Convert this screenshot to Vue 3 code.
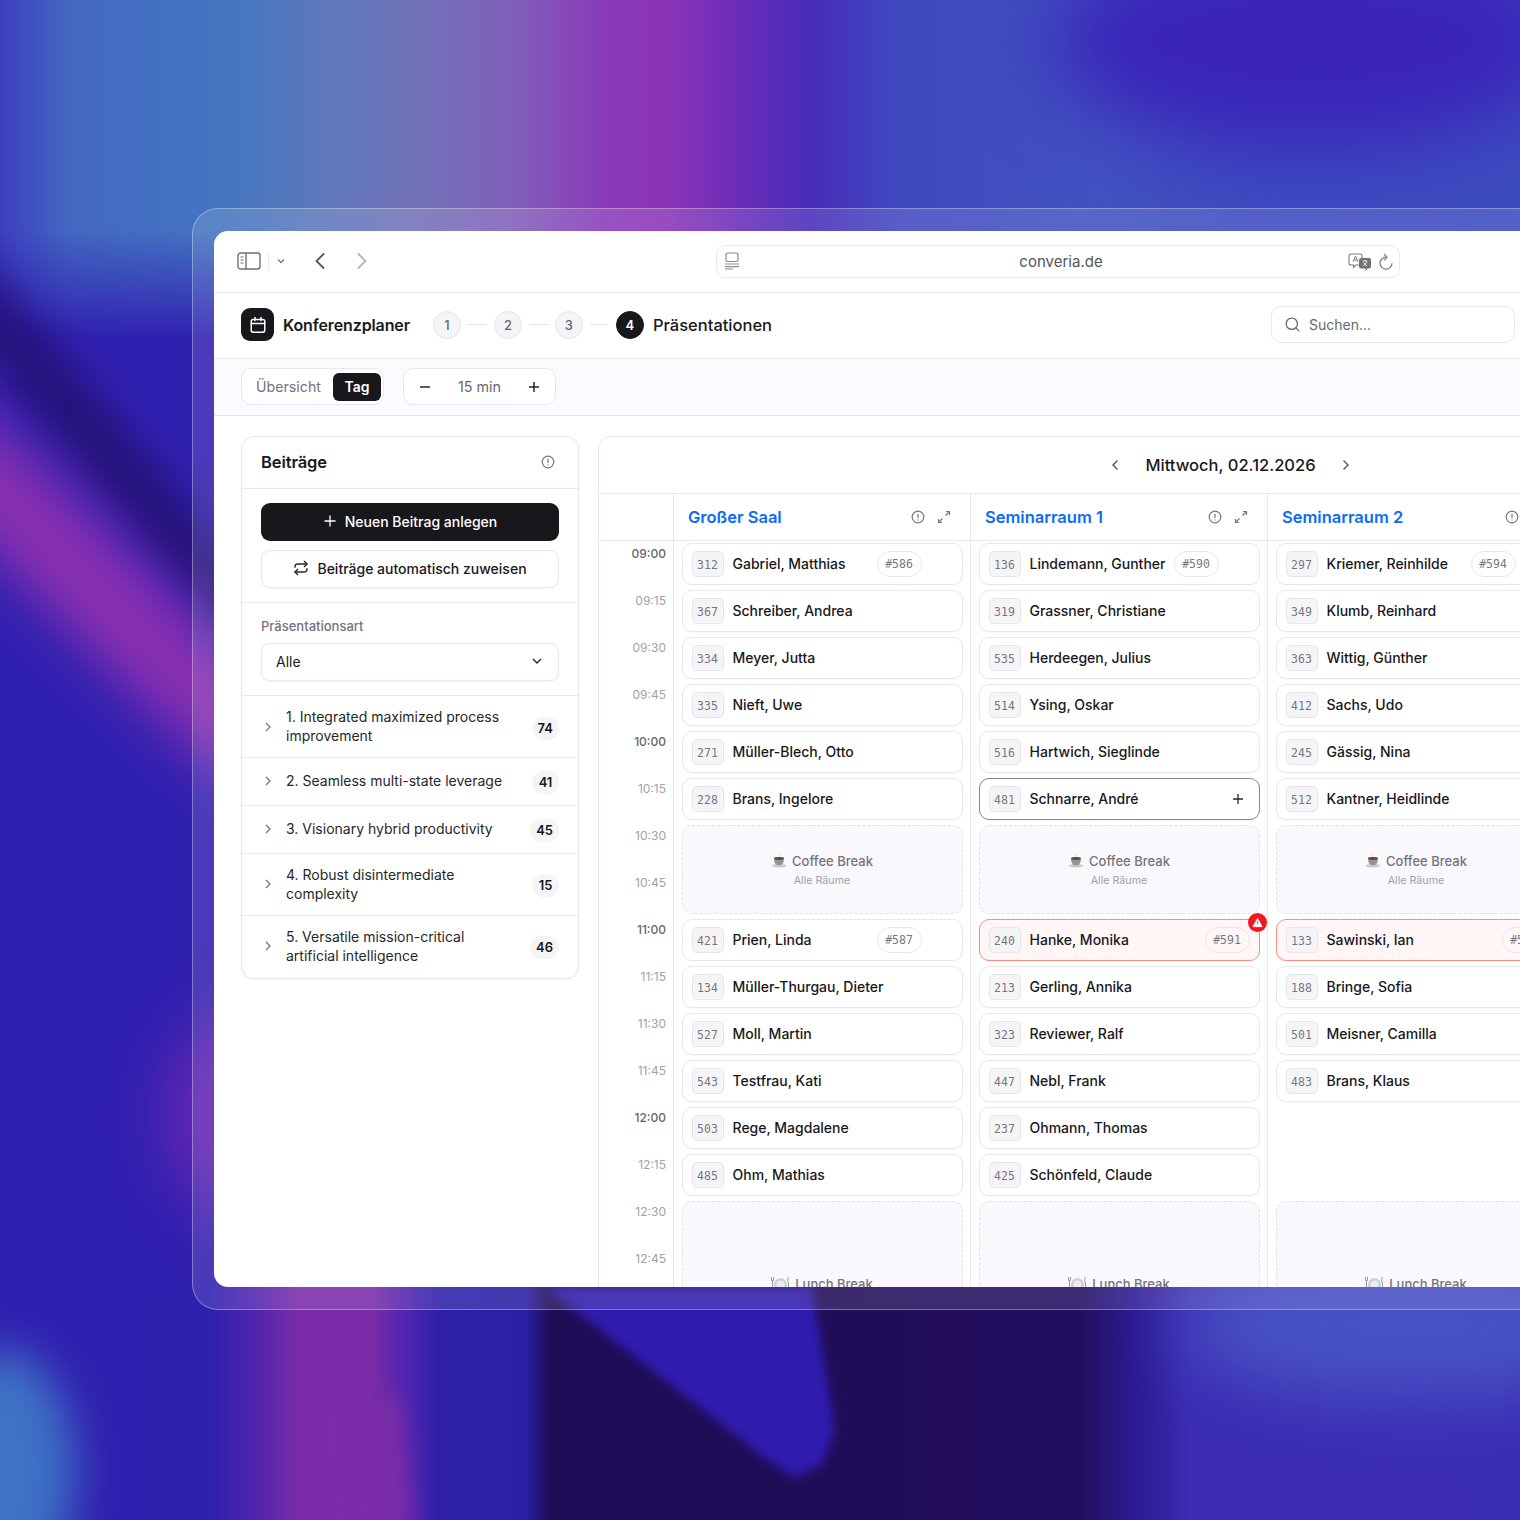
<script setup>
const times = [
  ['09:00', 1], ['09:15', 0], ['09:30', 0], ['09:45', 0], ['10:00', 1], ['10:15', 0], ['10:30', 0], ['10:45', 0],
  ['11:00', 1], ['11:15', 0], ['11:30', 0], ['11:45', 0], ['12:00', 1], ['12:15', 0], ['12:30', 0], ['12:45', 0],
]
const tracks = [
  ['1. Integrated maximized process improvement', 74],
  ['2. Seamless multi-state leverage', 41],
  ['3. Visionary hybrid productivity', 45],
  ['4. Robust disintermediate complexity', 15],
  ['5. Versatile mission-critical artificial intelligence', 46],
]
const b = (type) => ({ type })
const r = (id, name, chip, state) => ({ type: 'talk', id, name, chip, state })
const rooms = [
  {
    name: 'Großer Saal',
    items: [
      r(312, 'Gabriel, Matthias', '#586'), r(367, 'Schreiber, Andrea'), r(334, 'Meyer, Jutta'), r(335, 'Nieft, Uwe'),
      r(271, 'Müller-Blech, Otto'), r(228, 'Brans, Ingelore'), b('coffee'), r(421, 'Prien, Linda', '#587'),
      r(134, 'Müller-Thurgau, Dieter'), r(527, 'Moll, Martin'), r(543, 'Testfrau, Kati'), r(503, 'Rege, Magdalene'),
      r(485, 'Ohm, Mathias'), b('lunch'),
    ],
  },
  {
    name: 'Seminarraum 1',
    items: [
      r(136, 'Lindemann, Gunther', '#590'), r(319, 'Grassner, Christiane'), r(535, 'Herdeegen, Julius'), r(514, 'Ysing, Oskar'),
      r(516, 'Hartwich, Sieglinde'), r(481, 'Schnarre, André', null, 'hover'), b('coffee'), r(240, 'Hanke, Monika', '#591', 'conflict'),
      r(213, 'Gerling, Annika'), r(323, 'Reviewer, Ralf'), r(447, 'Nebl, Frank'), r(237, 'Ohmann, Thomas'),
      r(425, 'Schönfeld, Claude'), b('lunch'),
    ],
  },
  {
    name: 'Seminarraum 2',
    items: [
      r(297, 'Kriemer, Reinhilde', '#594'), r(349, 'Klumb, Reinhard'), r(363, 'Wittig, Günther'), r(412, 'Sachs, Udo'),
      r(245, 'Gässig, Nina'), r(512, 'Kantner, Heidlinde'), b('coffee'), r(133, 'Sawinski, Ian', '#591', 'conflict2'),
      r(188, 'Bringe, Sofia'), r(501, 'Meisner, Camilla'), r(483, 'Brans, Klaus'), b('empty'), b('empty'), b('lunch'),
    ],
  },
]
</script>

<template>
  <div class="page">
    <div class="bg" aria-hidden="true">
      <i class="band-top"></i>
      <i class="top-dark"></i>
      <i class="streak dark-streak"></i>
      <i class="streak purple-streak"></i>
      <i class="side-glow"></i>
      <i class="band-bottom"></i>
      <i class="bottom-purple"></i>
      <i class="wedge"></i>
      <i class="corner-blue"></i>
      <i class="right-blue"></i>
    </div>
    <div class="frame">
      <div class="window">
        <div class="toolbar">
          <svg class="tb-side" width="24" height="18" viewBox="0 0 24 18" fill="none" stroke="#6f6f76" stroke-width="1.4">
            <rect x="1" y="1" width="22" height="16" rx="2.5" /><path d="M9 1v16" />
            <path d="M3.5 5h3M3.5 8h3M3.5 11h3" stroke-width="1.2" />
          </svg>
          <i class="tb-sep"></i>
          <svg class="tb-caret" width="10" height="10" viewBox="0 0 10 10" fill="none" stroke="#77777e" stroke-width="1.4"><path d="M2 3.5 5 6.5 8 3.5" /></svg>
          <svg class="tb-back" width="12" height="18" viewBox="0 0 12 18" fill="none" stroke="#55555c" stroke-width="1.8"><path d="M10 1.5 2.5 9l7.5 7.5" /></svg>
          <svg class="tb-fwd" width="12" height="18" viewBox="0 0 12 18" fill="none" stroke="#b4b4ba" stroke-width="1.8"><path d="M2 1.5 9.5 9 2 16.5" /></svg>
          <div class="url">
            <svg class="url-site" width="16" height="18" viewBox="0 0 16 18" fill="none" stroke="#8a8a91" stroke-width="1.2">
              <rect x="2" y="1" width="12" height="8.5" rx="1.5" /><path d="M1 12h14M1 14.6h14M1 17h8" />
            </svg>
            <span class="url-text">converia.de</span>
            <svg class="url-tr" width="24" height="18" viewBox="0 0 24 18" fill="none">
              <path d="M3 1h9a2 2 0 0 1 2 2v7a2 2 0 0 1-2 2H8l-2.5 2.5V12H3a2 2 0 0 1-2-2V3a2 2 0 0 1 2-2z" stroke="#7d7d84" stroke-width="1.1" />
              <path d="M5 9l2.5-6L10 9M6 7h3" stroke="#7d7d84" stroke-width="1" />
              <path d="M13 5h8a2 2 0 0 1 2 2v6.5a2 2 0 0 1-2 2h-1.5L17.5 18v-2.500H13a2 2 0 0 1-2-2V7a2 2 0 0 1 2-2z" fill="#727279" />
              <path d="M14.800 8h4.600M17 7v1M15.500 13l3.500-4M15.500 9.500 19 13" stroke="#fff" stroke-width=".9" />
            </svg>
            <svg class="url-re" width="16" height="18" viewBox="0 0 16 18" fill="none" stroke="#7d7d84" stroke-width="1.2">
              <path d="M8 4.200A6 6 0 1 0 14 10.200" /><path d="M6 1l3 3.200-3 3.200" />
            </svg>
          </div>
        </div>

        <div class="appbar">
          <div class="logo">
            <svg width="18" height="18" viewBox="0 0 24 24" fill="none" stroke="#fff" stroke-width="2" stroke-linecap="round">
              <rect x="3" y="4.500" width="18" height="17" rx="2.500" /><path d="M8 2v4M16 2v4M3 10h18" />
            </svg>
          </div>
          <strong class="brand">Konferenzplaner</strong>
          <div class="steps">
            <span class="step">1</span><i class="step-line"></i>
            <span class="step">2</span><i class="step-line"></i>
            <span class="step">3</span><i class="step-line"></i>
            <span class="step step-on">4</span>
            <span class="step-label">Präsentationen</span>
          </div>
          <div class="search">
            <svg width="17" height="17" viewBox="0 0 24 24" fill="none" stroke="#66666d" stroke-width="1.800" stroke-linecap="round">
              <circle cx="11" cy="11" r="8" /><path d="m21 21-4.300-4.300" />
            </svg>
            <span>Suchen...</span>
          </div>
        </div>

        <div class="subbar">
          <div class="seg">
            <span class="seg-off">Übersicht</span>
            <span class="seg-on">Tag</span>
          </div>
          <div class="zoomer">
            <span class="zoom-btn">
              <svg width="14" height="14" viewBox="0 0 14 14" stroke="#27272a" stroke-width="1.500"><path d="M2 7h10" /></svg>
            </span>
            <span class="zoom-val">15 min</span>
            <span class="zoom-btn">
              <svg width="14" height="14" viewBox="0 0 14 14" stroke="#27272a" stroke-width="1.500"><path d="M2 7h10M7 2v10" /></svg>
            </span>
          </div>
        </div>

        <div class="content">
          <aside class="side">
            <div class="side-head">
              <h2>Beiträge</h2>
              <svg width="14" height="14" viewBox="0 0 14 14" fill="none" stroke="#77777e" stroke-width="1.200"><circle cx="7" cy="7" r="5.800" /><path d="M7 4v3.600" stroke-linecap="round" /><path d="M7 9.800v.2" stroke-linecap="round" /></svg>
            </div>
            <div class="side-actions">
              <button class="btn btn-dark">
                <svg width="14" height="14" viewBox="0 0 14 14" stroke="#fff" stroke-width="1.300"><path d="M1.500 7h11M7 1.500v11" /></svg>
                Neuen Beitrag anlegen
              </button>
              <button class="btn btn-light">
                <svg width="16" height="16" viewBox="0 0 24 24" fill="none" stroke="#27272a" stroke-width="2" stroke-linecap="round" stroke-linejoin="round">
                  <path d="m17 2 4 4-4 4" /><path d="M3 11v-1a4 4 0 0 1 4-4h14" /><path d="m7 22-4-4 4-4" /><path d="M21 13v1a4 4 0 0 1-4 4H3" />
                </svg>
                Beiträge automatisch zuweisen
              </button>
            </div>
            <div class="side-filter">
              <label>Präsentationsart</label>
              <div class="select">
                <span>Alle</span>
                <svg width="12" height="12" viewBox="0 0 12 12" fill="none" stroke="#27272a" stroke-width="1.400"><path d="M2 4l4 4 4-4" /></svg>
              </div>
            </div>
            <div v-for="t in tracks" :key="t[0]" class="track">
              <svg class="track-ch" width="8" height="12" viewBox="0 0 8 12" fill="none" stroke="#77777e" stroke-width="1.300"><path d="M2 2l4 4-4 4" /></svg>
              <span class="track-name">{{ t[0] }}</span>
              <span class="track-n">{{ t[1] }}</span>
            </div>
          </aside>

          <section class="plan">
            <div class="plan-date">
              <svg width="8" height="12" viewBox="0 0 8 12" fill="none" stroke="#55555c" stroke-width="1.400"><path d="M6.500 1.500 2 6l4.500 4.500" /></svg>
              <strong>Mittwoch, 02.12.2026</strong>
              <svg width="8" height="12" viewBox="0 0 8 12" fill="none" stroke="#55555c" stroke-width="1.400"><path d="M1.500 1.500 6 6l-4.500 4.500" /></svg>
            </div>
            <div class="grid">
              <div class="times">
                <div class="corner"></div>
                <div class="time-list">
                  <span v-for="t in times" :key="t[0]" class="time" :class="{ hour: t[1] }">{{ t[0] }}</span>
                </div>
              </div>
              <div v-for="room in rooms" :key="room.name" class="room">
                <div class="room-head">
                  <span class="room-name">{{ room.name }}</span>
                  <svg class="room-info" width="14" height="14" viewBox="0 0 14 14" fill="none" stroke="#77777e" stroke-width="1.200"><circle cx="7" cy="7" r="5.800" /><path d="M7 4v3.600M7 9.800v.2" stroke-linecap="round" /></svg>
                  <svg class="room-exp" width="14" height="14" viewBox="0 0 14 14" fill="none" stroke="#77777e" stroke-width="1.200"><path d="M9 1.500h3.500V5M12.500 1.500 8.500 5.500M5 12.500H1.500V9M1.500 12.500l4-4" /></svg>
                </div>
                <div class="slots">
                  <template v-for="(it, i) in room.items" :key="i">
                    <div v-if="it.type === 'talk'" class="talk" :class="it.state">
                      <span class="talk-id">{{ it.id }}</span>
                      <span class="talk-name">{{ it.name }}</span>
                      <span v-if="it.chip" class="chip">{{ it.chip }}</span>
                      <svg v-if="it.state === 'hover'" class="talk-plus" width="12" height="12" viewBox="0 0 12 12" stroke="#27272a" stroke-width="1.300"><path d="M1 6h10M6 1v10" /></svg>
                      <span v-if="it.state === 'conflict'" class="alert">
                        <svg width="11" height="11" viewBox="0 0 12 12" fill="#fff" stroke="#fff" stroke-width="1" stroke-linejoin="round"><path d="M6 1.500 11 10.500H1z" /><path d="M6 4.800v2.600M6 8.500v.5" stroke="#f3161c" /></svg>
                      </span>
                    </div>
                    <div v-else-if="it.type === 'empty'" class="blank"></div>
                    <div v-else class="break" :class="it.type">
                      <div class="break-title">
                        <svg v-if="it.type === 'coffee'" width="16" height="14" viewBox="0 0 16 14">
                          <ellipse cx="8" cy="11.800" rx="7.500" ry="1.800" fill="#cfcbc8" />
                          <path d="M3 4.500h10c0 3.500-1.500 6.200-3 6.800H6C4.500 10.700 3 8 3 4.500z" fill="#9a938f" />
                          <ellipse cx="8" cy="4.500" rx="5" ry="1.400" fill="#5b4a43" />
                          <path d="M8 .3c-1 .9 1 1.400 0 2.400" stroke="#dcdada" fill="none" />
                        </svg>
                        <svg v-else width="19" height="16" viewBox="0 0 19 16">
                          <circle cx="9.500" cy="8.500" r="6.500" fill="#cfcfd5" /><circle cx="9.500" cy="8.500" r="4" fill="#ececf0" />
                          <path d="M.5 1v3a1 1 0 0 0 2 0V1M1.500 4v11M17.500 1c-1 2-1 5 0 6v8" stroke="#9a9aa1" fill="none" stroke-width="1" />
                        </svg>
                        <span>{{ it.type === 'coffee' ? 'Coffee Break' : 'Lunch Break' }}</span>
                      </div>
                      <div class="break-sub">Alle Räume</div>
                    </div>
                  </template>
                </div>
              </div>
            </div>
          </section>
        </div>
      </div>
    </div>
  </div>
</template>

<style>
html, body { margin: 0; background: #3020b0; }
</style>

<style scoped>
* { box-sizing: border-box; }
.page {
  position: relative;
  width: 1520px;
  height: 1520px;
  overflow: hidden;
  padding: 208px 0 0 192px;
  font-family: Inter, "Noto Sans", sans-serif;
  color: #18181b;
  background: #3020b0;
}

/* the mesh-gradient wallpaper */
.bg { position: absolute; inset: 0; overflow: hidden; }
.bg i { position: absolute; display: block; }
.band-top {
  left: 0;
  top: 0;
  width: 100%;
  height: 400px;
  background: linear-gradient(90deg, #3d3fbe 0, #4368c0 70px, #4476c0 230px, #5f78bb 330px, #7370b8 420px, #8060b8 510px, #8a38ba 610px, #8a34b8 670px, #6a2cb8 740px, #472cba 810px, #4049c0 900px, #4152c0 1100px, #3d4cc0 1250px, #3d4cc0 100%);
  -webkit-mask-image: linear-gradient(180deg, #000 0, #000 230px, transparent 340px);
  mask-image: linear-gradient(180deg, #000 0, #000 230px, transparent 340px);
}
.top-dark {
  left: 1050px;
  top: -70px;
  width: 520px;
  height: 220px;
  border-radius: 50%;
  background: #3a24b8;
  filter: blur(40px);
}
.streak { border-radius: 40%; }
.dark-streak {
  left: -180px;
  top: 415px;
  width: 560px;
  height: 62px;
  background: #25127a;
  transform: rotate(50deg);
  filter: blur(18px);
}
.purple-streak {
  left: -220px;
  top: 545px;
  width: 640px;
  height: 95px;
  background: #8a30b0;
  transform: rotate(45deg);
  filter: blur(26px);
}
.side-glow {
  left: 165px;
  top: 1000px;
  width: 240px;
  height: 230px;
  border-radius: 50%;
  background: #6827b2;
  filter: blur(30px);
}
.band-bottom {
  left: 0;
  top: 1287px;
  width: 100%;
  height: 233px;
  background: linear-gradient(90deg, #3020b0 0, #3020b0 70px, #3020ae 210px, #4c24ae 250px, #7a2ca8 300px, #7a2ca8 370px, #4c24ae 410px, #2d1fa8 440px, #2c1ea6 525px, #200d58 550px, #200d58 815px, #220e60 1080px, #2c1a92 1135px, #3b2cb2 1190px, #3b2db4 100%);
}
.bottom-purple {
  left: 345px;
  top: 1400px;
  width: 62px;
  height: 130px;
  background: #7a2ca8;
  transform: rotate(-6deg);
  filter: blur(10px);
}
.wedge {
  left: 540px;
  top: 1280px;
  width: 300px;
  height: 210px;
  filter: blur(5px);
}
.wedge::before {
  content: "";
  position: absolute;
  inset: 0;
  background: #2f1cae;
  clip-path: polygon(1.7% 3.3%, 90.7% 3.3%, 98.3% 71.4%, 94% 88%, 85% 94.3%, 76.7% 86.7%);
}
.corner-blue {
  left: -70px;
  top: 1350px;
  width: 145px;
  height: 240px;
  border-radius: 50%;
  background: #3e72c4;
  filter: blur(22px);
}
.right-blue {
  left: 1180px;
  top: 1250px;
  width: 460px;
  height: 150px;
  border-radius: 50%;
  background: #4a5ac8;
  opacity: .85;
  filter: blur(35px);
}

.frame {
  position: relative;
  width: 1760px;
  height: 1102px;
  padding: 22px 21px;
  border: 1px solid rgba(255,255,255,.32);
  border-radius: 26px;
  background: rgba(255,255,255,.12);
}
.window {
  width: 1688px;
  height: 1056px;
  overflow: hidden;
  border-radius: 14px 14px 0 14px;
  background: #fff;
}

.toolbar {
  display: flex;
  align-items: center;
  height: 62px;
  padding-left: 23px;
  border-bottom: 1.5px solid #e8e7ee;
}
.tb-side, .tb-sep, .tb-caret, .tb-back, .tb-fwd { margin-bottom: 2px; }
.tb-sep { display: block; width: 1px; height: 18px; margin-left: 7px; background: #ececf0; }
.tb-caret { margin-left: 7px; }
.tb-back { margin-left: 28px; }
.tb-fwd { margin-left: 30px; }
.url {
  position: relative;
  display: flex;
  align-items: center;
  width: 684px;
  height: 33px;
  margin-left: 348px;
  padding: 0 5px 0 7px;
  border: 1.5px solid #e9e8ee;
  border-radius: 9px;
  color: #55555c;
  font-size: 15px;
}
.url-site { margin-top: -2px; }
.url-text { flex: 1; padding-left: 34px; text-align: center; }
.url-re { margin-left: 6px; }

.appbar {
  display: flex;
  align-items: center;
  width: 1301px;
  height: 65px;
  padding: 0 0 2px 27px;
}
.logo {
  display: flex;
  align-items: center;
  justify-content: center;
  width: 33px;
  height: 33px;
  border-radius: 9px;
  background: #18171c;
}
.brand { margin-left: 9px; font-size: 16px; font-weight: 600; letter-spacing: -.12px; }
.steps { display: flex; align-items: center; gap: 7px; margin-left: 23px; }
.step {
  display: flex;
  align-items: center;
  justify-content: center;
  width: 28px;
  height: 28px;
  border: 1.5px solid #e6e5eb;
  border-radius: 50%;
  background: #f5f5f8;
  color: #66666d;
  font-size: 13px;
  font-weight: 500;
}
.step-on { border-color: #18171c; background: #18171c; color: #fff; font-weight: 600; }
.step-line { display: block; width: 19px; height: 1.500px; background: #e4e4e8; }
.step-label { margin-left: 2px; font-size: 16.500px; font-weight: 500; }
.search {
  display: flex;
  align-items: center;
  gap: 8px;
  width: 244px;
  height: 37px;
  margin-left: auto;
  padding-left: 12px;
  border: 1.5px solid #e8e7ee;
  border-radius: 10px;
  color: #66666d;
  font-size: 14px;
}

.subbar {
  display: flex;
  align-items: center;
  gap: 19px;
  height: 58px;
  padding: 0 0 1px 27px;
  border-top: 1.5px solid #e8e7ee;
  border-bottom: 1.5px solid #e8e7ee;
  background: #fbfafe;
}
.seg, .zoomer {
  display: flex;
  align-items: center;
  height: 37px;
  border: 1.5px solid #e8e7ee;
  border-radius: 10px;
  background: #fff;
}
.seg { width: 143px; padding-left: 14px; }
.seg-off { color: #74747b; font-size: 14.200px; }
.seg-on {
  margin-left: 12px;
  padding: 0 11.500px;
  height: 28px;
  line-height: 27px;
  border-radius: 6px;
  background: #18171c;
  color: #fff;
  font-size: 14px;
  font-weight: 600;
}
.zoomer { width: 153px; padding: 0 14px; justify-content: space-between; }
.zoom-btn { display: flex; }
.zoom-val { color: #66666d; font-size: 14.300px; }

.content { display: flex; align-items: flex-start; gap: 19px; padding: 20px 0 0 27px; }
.side {
  width: 338px;
  flex: none;
  padding-bottom: 1.500px;
  border: 1.5px solid #e8e7ee;
  border-radius: 13px;
  background: #fff;
  box-shadow: 0 1px 2px rgba(30,30,60,.06);
}
.side-head {
  display: flex;
  align-items: center;
  justify-content: space-between;
  height: 51px;
  padding: 0 23px 2px 19px;
}
.side-head h2 { margin: 0; font-size: 16.500px; font-weight: 600; letter-spacing: -.1px; }
.side-actions {
  display: flex;
  flex-direction: column;
  gap: 9px;
  padding: 14px 19px 14px;
  border-top: 1.5px solid #e8e7ee;
  border-bottom: 1.5px solid #e8e7ee;
}
.btn {
  display: flex;
  align-items: center;
  justify-content: center;
  gap: 8px;
  height: 38px;
  padding: 0 0 2px;
  border-radius: 9px;
  font-family: inherit;
  font-size: 14px;
  font-weight: 500;
}
.btn-dark { border: 0; background: #18171c; color: #fff; }
.btn-light { border: 1.5px solid #e8e7ee; background: #fff; color: #18181b; box-shadow: 0 1px 2px rgba(30,30,60,.05); }
.side-filter { padding: 15px 19px 14px; }
.side-filter label { display: block; color: #74747b; font-size: 13px; font-weight: 500; line-height: 16px; }
.select {
  display: flex;
  align-items: center;
  justify-content: space-between;
  height: 38px;
  margin-top: 9px;
  padding: 0 15px 2px 14px;
  border: 1.5px solid #e8e7ee;
  border-radius: 9px;
  font-size: 14px;
  box-shadow: 0 1px 2px rgba(30,30,60,.05);
}
.track {
  display: flex;
  align-items: center;
  min-height: 48px;
  padding: 11px 19px 11.800px 22px;
  border-top: 1.500px solid #e8e7ee;
}
.track-ch { flex: none; margin-top: 1px; }
.track-name { width: 225px; margin-left: 14px; font-size: 14px; line-height: 19px; color: #27272a; }
.track-n {
  margin: 2px 0 -2px auto;
  min-width: 27px;
  height: 23px;
  padding: 0 6px;
  border-radius: 12px;
  background: #f5f5f8;
  font-size: 13px;
  font-weight: 600;
  line-height: 23px;
  text-align: center;
}

.plan {
  width: 1265px;
  flex: none;
  border: 1.5px solid #e8e7ee;
  border-radius: 13px 13px 0 0;
  background: #fff;
}
.plan-date {
  display: flex;
  align-items: center;
  justify-content: center;
  gap: 26px;
  height: 56px;
}
.plan-date strong { font-size: 16.500px; font-weight: 500; }
.grid { display: flex; border-top: 1.5px solid #e8e7ee; }
.times { width: 74px; flex: none; }
.corner { height: 47px; border-bottom: 1.5px solid #e8e7ee; }
.time-list { display: flex; flex-direction: column; padding-top: 4px; }
.time {
  height: 47px;
  padding-right: 7px;
  color: #a1a1a9;
  font-size: 12px;
  line-height: 17px;
  text-align: right;
}
.hour { color: #66666d; font-weight: 500; }
.room { width: 297px; flex: none; border-left: 1.5px solid #e8e7ee; }
.room-head {
  display: flex;
  align-items: center;
  height: 47px;
  padding: 0 19px 0 14px;
  border-bottom: 1.5px solid #e8e7ee;
}
.room-name { flex: 1; color: #0a6cf5; font-size: 16.500px; font-weight: 600; }
.room-exp { margin-left: 12px; }
.slots { display: flex; flex-direction: column; gap: 5px; padding: 2px 7.500px 0 7.500px; }
.talk {
  position: relative;
  display: flex;
  align-items: center;
  height: 42px;
  padding: 0 9px;
  border: 1.5px solid #e8e7ee;
  border-radius: 10px;
  background: #fff;
  box-shadow: 0 1px 1px rgba(30,30,60,.03);
}
.talk-id {
  flex: none;
  width: 32px;
  height: 26px;
  border: 1px solid #e6e5eb;
  border-radius: 5px;
  background: #f5f5f8;
  color: #77777e;
  font-family: "DejaVu Sans Mono", monospace;
  font-size: 11.500px;
  line-height: 26px;
  text-align: center;
}
.talk-name { margin: 0 0 2px 9px; font-size: 14px; font-weight: 500; white-space: nowrap; }
.chip {
  position: absolute;
  right: 40px;
  width: 45px;
  height: 26px;
  border: 1.5px solid #e8e7ee;
  border-radius: 13px;
  background: #fff;
  color: #77777e;
  font-family: "DejaVu Sans Mono", monospace;
  font-size: 11.500px;
  line-height: 25px;
  text-align: center;
}
.talk-plus { position: absolute; right: 15px; }
.hover { border-color: #85858c; }
.conflict, .conflict2 { border-color: #fb8b85; background: #fff6f5; }
.conflict .chip, .conflict2 .chip { right: 9px; background: transparent; }
.alert {
  position: absolute;
  top: -7px;
  right: -8px;
  display: flex;
  align-items: center;
  justify-content: center;
  width: 19px;
  height: 19px;
  border-radius: 50%;
  background: #f3161c;
}
.blank { height: 42px; }
.break {
  border: 1.5px dashed #e2e1e8;
  border-radius: 10px;
  background: #f9f8fc;
  text-align: center;
}
.coffee { height: 89px; padding-top: 25px; }
.lunch { height: 183px; padding-top: 72px; }
.break-title {
  display: flex;
  align-items: center;
  justify-content: center;
  gap: 5px;
  height: 20px;
  color: #74747b;
  font-size: 13px;
  font-weight: 500;
}
.break-sub { margin-top: 3px; color: #a1a1a9; font-size: 10.700px; line-height: 14px; }
</style>
